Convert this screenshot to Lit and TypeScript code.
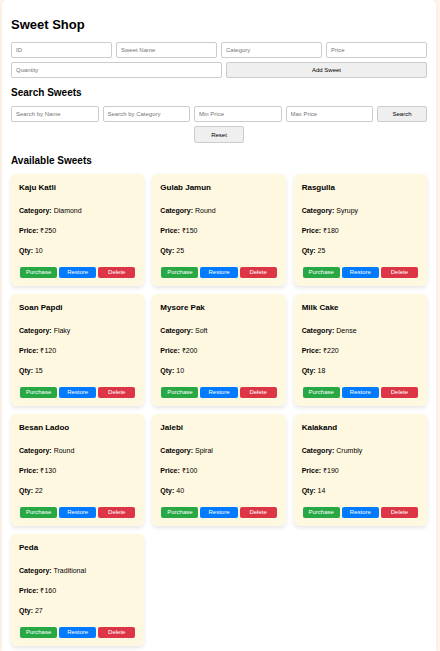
import { LitElement, html, css } from "lit";
import { customElement, property } from "lit/decorators.js";

interface Sweet {
  name: string;
  category: string;
  price: number;
  qty: number;
}

const SWEETS: Sweet[] = [
  { name: "Kaju Katli", category: "Diamond", price: 250, qty: 10 },
  { name: "Gulab Jamun", category: "Round", price: 150, qty: 25 },
  { name: "Rasgulla", category: "Syrupy", price: 180, qty: 25 },
  { name: "Soan Papdi", category: "Flaky", price: 120, qty: 15 },
  { name: "Mysore Pak", category: "Soft", price: 200, qty: 10 },
  { name: "Milk Cake", category: "Dense", price: 220, qty: 18 },
  { name: "Besan Ladoo", category: "Round", price: 130, qty: 22 },
  { name: "Jalebi", category: "Spiral", price: 100, qty: 40 },
  { name: "Kalakand", category: "Crumbly", price: 190, qty: 14 },
  { name: "Peda", category: "Traditional", price: 160, qty: 27 },
];

@customElement("sweet-card")
export class SweetCard extends LitElement {
  @property({ attribute: false }) sweet!: Sweet;

  static styles = css`
    :host {
      display: block;
      padding: 8px;
      background: #fff8e1;
      border-radius: 5px;
      box-shadow: 0 2px 4px rgba(0, 0, 0, 0.1);
    }
    .name {
      margin: 0 0 13px;
      font-size: 8px;
      line-height: 12px;
    }
    .line {
      margin: 0 0 12px;
      font-size: 7px;
      line-height: 8px;
    }
    .actions {
      display: flex;
    }
    .action {
      flex: 1;
      height: 11px;
      margin: 0 1px;
      padding: 0;
      border: 0;
      border-radius: 2px;
      font: 6px/11px "Liberation Sans", Arial, sans-serif;
      color: #fff;
      cursor: pointer;
    }
    .purchase {
      background: #28a745;
    }
    .restore {
      background: #007bff;
    }
    .delete {
      background: #dc3545;
    }
  `;

  render() {
    const s = this.sweet;
    return html`
      <h3 class="name">${s.name}</h3>
      <p class="line"><strong>Category:</strong> ${s.category}</p>
      <p class="line"><strong>Price:</strong> ₹${s.price}</p>
      <p class="line"><strong>Qty:</strong> ${s.qty}</p>
      <div class="actions">
        <button class="action purchase">Purchase</button>
        <button class="action restore">Restore</button>
        <button class="action delete">Delete</button>
      </div>
    `;
  }
}

@customElement("app-root")
export class AppRoot extends LitElement {
  static styles = css`
    :host {
      display: block;
      box-sizing: border-box;
      min-height: 100vh;
      padding: 0 4px 0 2px;
      background: #fff5ea;
      color: #000;
      font-family: "Liberation Sans", Arial, sans-serif;
    }
    .shop {
      box-sizing: border-box;
      min-height: 100vh;
      padding: 17px 9px 5px;
      background: #fff;
      border-radius: 5px 5px 0 0;
      box-shadow: 0 0 5px rgba(0, 0, 0, 0.06);
    }
    .title {
      margin: 0 0 10px;
      font-size: 13px;
      line-height: 15px;
    }
    .heading {
      margin: 0 0 7px;
      font-size: 10px;
      line-height: 12px;
    }
    .form {
      display: flex;
      flex-wrap: wrap;
      justify-content: center;
      gap: 4px;
      margin: 0 0 9px;
    }
    .search {
      margin-bottom: 12px;
    }
    .field,
    .button {
      box-sizing: border-box;
      height: 16px;
      border: 1px solid #ccc;
      border-radius: 2px;
      font: 6px/8px "Liberation Sans", Arial, sans-serif;
    }
    .field {
      flex: 1 1 92px;
      min-width: 0;
      padding: 0 4px;
      background: #fff;
    }
    .field::placeholder {
      color: #757575;
    }
    .search .field {
      flex-basis: 80px;
    }
    .button {
      padding: 0;
      background: #efefef;
      color: #000;
      cursor: pointer;
    }
    .add {
      flex: 1 1 82px;
    }
    .find,
    .reset {
      flex: 0 0 50px;
    }
    .reset {
      height: 17px;
    }
    .grid {
      display: grid;
      grid-template-columns: repeat(3, 1fr);
      gap: 8px;
    }
  `;

  private field(label: string) {
    return html`<input class="field" type="text" placeholder=${label} aria-label=${label} />`;
  }

  private hold(e: Event) {
    e.preventDefault();
  }

  render() {
    return html`
      <main class="shop">
        <h1 class="title">Sweet Shop</h1>
        <form class="form" @submit=${this.hold}>
          ${["ID", "Sweet Name", "Category", "Price", "Quantity"].map((l) => this.field(l))}
          <button class="button add" type="submit">Add Sweet</button>
        </form>
        <h2 class="heading">Search Sweets</h2>
        <form class="form search" @submit=${this.hold}>
          ${["Search by Name", "Search by Category", "Min Price", "Max Price"].map((l) => this.field(l))}
          <button class="button find" type="submit">Search</button>
          <button class="button reset" type="reset">Reset</button>
        </form>
        <h2 class="heading">Available Sweets</h2>
        <section class="grid">
          ${SWEETS.map((s) => html`<sweet-card .sweet=${s}></sweet-card>`)}
        </section>
      </main>
    `;
  }
}
